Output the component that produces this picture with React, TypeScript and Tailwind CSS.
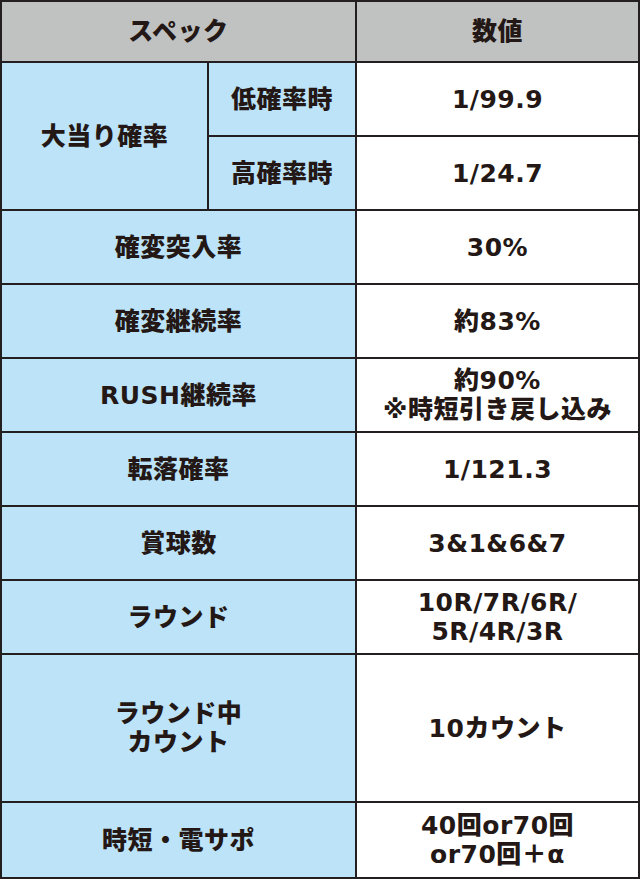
const head = "bg-[#c0c1c1] flex items-center justify-center";
const blue = "bg-[#bce3f8] flex items-center justify-center text-center";
const white = "bg-white flex items-center justify-center text-center";

const rows: { label: React.ReactNode; value: React.ReactNode; h: string }[] = [
  { label: "確変突入率", value: "30%", h: "h-[72px]" },
  { label: "確変継続率", value: "約83%", h: "h-[72px]" },
  {
    label: "RUSH継続率",
    value: (
      <>
        約90%
        <br />
        ※時短引き戻し込み
      </>
    ),
    h: "h-[72px]",
  },
  { label: "転落確率", value: "1/121.3", h: "h-[72px]" },
  { label: "賞球数", value: "3&1&6&7", h: "h-[72px]" },
  {
    label: "ラウンド",
    value: (
      <>
        10R/7R/6R/
        <br />
        5R/4R/3R
      </>
    ),
    h: "h-[72px]",
  },
  {
    label: (
      <>
        ラウンド中
        <br />
        カウント
      </>
    ),
    value: "10カウント",
    h: "h-[146px]",
  },
  {
    label: "時短・電サポ",
    value: (
      <>
        40回or70回
        <br />
        or70回＋α
      </>
    ),
    h: "h-[74px]",
  },
];

export default function App() {
  return (
    <div className="w-[640px] h-[879px] bg-white">
      <div
        className="grid grid-cols-[205px_146px_1fr] gap-[2px] p-[2px] bg-[#231f20] text-[#231815] font-black text-[25px] leading-[29px] tracking-[0.02em]"
        style={{ fontFamily: '"DejaVu Sans", "Noto Sans CJK JP", sans-serif' }}
      >
        <div className={`${head} col-span-2 h-[59px]`}>スペック</div>
        <div className={`${head} h-[59px]`}>数値</div>

        <div className={`${blue} row-span-2`}>大当り確率</div>
        <div className={`${blue} h-[72px]`}>低確率時</div>
        <div className={`${white} h-[72px]`}>1/99.9</div>
        <div className={`${blue} h-[72px]`}>高確率時</div>
        <div className={`${white} h-[72px]`}>1/24.7</div>

        {rows.map((r, i) => (
          <div key={i} className="contents">
            <div className={`${blue} col-span-2 ${r.h}`}>{r.label}</div>
            <div className={`${white} ${r.h}`}>{r.value}</div>
          </div>
        ))}
      </div>
    </div>
  );
}
